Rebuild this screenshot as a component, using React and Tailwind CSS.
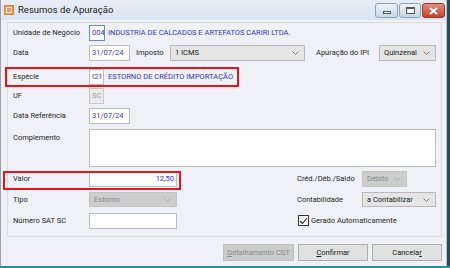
import React from "react";

const font = { fontFamily: 'Roboto, "Noto Sans", sans-serif' };

function Arrow({ color = "#6b6b6b" }) {
  return (
    <svg width="7" height="4" viewBox="0 0 7 4" className="shrink-0">
      <path d="M0.5 0.5 L3.5 3.5 L6.5 0.5" fill="none" stroke={color} strokeWidth="0.9" />
    </svg>
  );
}

function Select({ w, text, disabled, h = "h-[16px]" }) {
  return (
    <div
      className={`${w} ${h} shrink-0 flex items-center justify-between pl-[4px] pr-[5px] border ${
        disabled ? "bg-[#cdcdcd] border-[#c4c4c4] text-[#8a8a8a]" : "bg-[#e5e5e5] border-[#b9b9b9] text-[#1a1a1a]"
      }`}
    >
      <span className="leading-none whitespace-nowrap">{text}</span>
      <Arrow color={disabled ? "#a8a8a8" : "#6b6b6b"} />
    </div>
  );
}

function Input({ w, text, right, focus, disabled, h = "h-[16px]" }) {
  return (
    <div
      className={`${w} ${h} shrink-0 flex items-center px-[2px] border overflow-hidden ${
        focus ? "border-[#5b8fc7]" : disabled ? "border-[#c9c9c9]" : "border-[#bdbdbd]"
      } ${disabled ? "bg-[#ececec] text-[#9a9a9a]" : "bg-white text-[#3636c4]"} ${right ? "justify-end" : ""}`}
    >
      <span className="leading-none whitespace-nowrap">{text}</span>
    </div>
  );
}

function Label({ children, className = "" }) {
  return <div className={`w-[76px] shrink-0 text-[#1e1e1e] leading-none whitespace-nowrap ${className}`}>{children}</div>;
}

function Button({ w, children, disabled }) {
  return (
    <div
      className={`${w} h-[17px] flex items-center justify-center border leading-none whitespace-nowrap ${
        disabled ? "bg-[#cccccc] border-[#bfbfbf] text-[#8a8a8a]" : "bg-[#e1e1e1] border-[#adadad] text-[#1a1a1a]"
      }`}
    >
      {children}
    </div>
  );
}

export default function App() {
  return (
    <div className="w-[450px] h-[268px] flex flex-col overflow-hidden bg-[#2e4a55] text-[7.5px]" style={font}>
      <div className="flex h-[266px]">
        <div className="relative w-[447px] h-[266px] flex flex-col bg-[#f0f1f7] border-l border-[#9aa3ad] border-r border-r-[#b9c3cf]">
          {/* Title bar */}
          <div className="h-[20px] shrink-0 flex items-start bg-gradient-to-b from-[#e6edf6] to-[#dbe5f1]">
            <div className="mt-[5px] ml-[3px] w-[10px] h-[10px] bg-[#f39a5a] border border-[#e0783a] flex items-center justify-center">
              <div className="w-[6px] h-[6px] border border-white/80" />
            </div>
            <div className="ml-[4px] mt-[5px] text-[9.5px] leading-none text-[#1b1b1b] whitespace-nowrap">Resumos de Apuração</div>
            <div className="ml-auto mt-[3px] mr-[1px] flex gap-[1px]">
              <div className="w-[23px] h-[15px] rounded-[3px] border border-[#8ea2b8] bg-gradient-to-b from-[#eef3f9] to-[#c9d6e6] flex items-center justify-center">
                <div className="w-[8px] h-[3px] bg-white border border-[#4a5a6c] mt-[4px]" />
              </div>
              <div className="w-[22px] h-[15px] rounded-[3px] border border-[#8ea2b8] bg-gradient-to-b from-[#eef3f9] to-[#c9d6e6] flex items-center justify-center">
                <div className="w-[9px] h-[7px] border border-[#4a5a6c] border-t-2 bg-white" />
              </div>
              <div className="w-[23px] h-[15px] rounded-[3px] border border-[#8e3a30] bg-gradient-to-b from-[#e48b7e] to-[#c3402f] flex items-center justify-center">
                <svg width="9" height="8" viewBox="0 0 9 8">
                  <path d="M1 1 L8 7 M8 1 L1 7" stroke="white" strokeWidth="2" />
                </svg>
              </div>
            </div>
          </div>

          {/* Client */}
          <div className="flex-1 flex flex-col pl-[6px] pr-[4px]">
            <div className="mt-[2px] h-[215px] border border-[#d9dadf] flex flex-col pl-[5px] pr-[5px]">
              {/* Row 1 */}
              <div className="mt-[2px] h-[16px] flex items-center">
                <Label>Unidade de Negócio</Label>
                <Input w="w-[16px]" text="004" focus />
                <span className="ml-[3px] text-[#3636c4] leading-none whitespace-nowrap">INDUSTRIA DE CALCADOS E ARTEFATOS CARIRI LTDA.</span>
              </div>
              {/* Row 2 */}
              <div className="mt-[4px] h-[16px] flex items-center">
                <Label>Data</Label>
                <Input w="w-[41px]" text="31/07/24" />
                <span className="ml-[6px] w-[34px] leading-none text-[#1e1e1e] whitespace-nowrap">Imposto</span>
                <Select w="w-[135px]" text="1 ICMS" />
                <span className="ml-[11px] w-[63px] leading-none text-[#1e1e1e] whitespace-nowrap">Apuração do IPI</span>
                <Select w="w-[57px]" text="Quinzenal" />
              </div>
              {/* Row 3 */}
              <div className="mt-[8px] h-[16px] flex items-center">
                <Label>Espécie</Label>
                <Input w="w-[15px]" text="I21" />
                <span className="ml-[4px] text-[#3636c4] leading-none whitespace-nowrap">ESTORNO DE CRÉDITO IMPORTAÇÃO</span>
              </div>
              {/* Row 4 */}
              <div className="mt-[3px] h-[16px] flex items-center">
                <Label>UF</Label>
                <Input w="w-[15px]" text="SC" disabled />
              </div>
              {/* Row 5 */}
              <div className="mt-[4px] h-[16px] flex items-center">
                <Label>Data Referência</Label>
                <Input w="w-[41px]" text="31/07/24" />
              </div>
              {/* Row 6 */}
              <div className="mt-[5px] h-[38px] flex items-start">
                <Label className="mt-[5px]">Complemento</Label>
                <div className="w-[347px] h-[38px] bg-white border border-[#bdbdbd]" />
              </div>
              {/* Row 7 */}
              <div className="mt-[4px] h-[16px] flex items-center">
                <Label>Valor</Label>
                <Input w="w-[88px]" text="12,50" right />
                <span className="ml-[120px] w-[65px] leading-none text-[#1e1e1e] whitespace-nowrap">Créd./Déb./Saldo</span>
                <Select w="w-[45px]" text="Débito" disabled />
              </div>
              {/* Row 8 */}
              <div className="mt-[5px] h-[15px] flex items-center">
                <Label>Tipo</Label>
                <Select w="w-[88px]" h="h-[15px]" text="Estorno" disabled />
                <span className="ml-[120px] w-[65px] leading-none text-[#1e1e1e] whitespace-nowrap">Contabilidade</span>
                <Select w="w-[74px]" h="h-[15px]" text="a Contabilizar" />
              </div>
              {/* Row 9 */}
              <div className="mt-[6px] h-[15px] flex items-center">
                <Label>Número SAT SC</Label>
                <Input w="w-[88px]" h="h-[16px]" text="" />
                <div className="ml-[121px] flex items-center">
                  <div className="w-[11px] h-[11px] bg-white border border-[#333] flex items-center justify-center">
                    <svg width="9" height="8" viewBox="0 0 9 8">
                      <path d="M1 4 L3.5 6.5 L8 1" fill="none" stroke="#222" strokeWidth="1.1" />
                    </svg>
                  </div>
                  <span className="ml-[2px] leading-none text-[#1e1e1e] whitespace-nowrap">Gerado Automaticamente</span>
                </div>
              </div>
            </div>

            {/* Buttons */}
            <div className="mt-[7px] flex justify-end gap-[4px]">
              <Button w="w-[71px]" disabled>
                <span><u>D</u>etalhamento CST</span>
              </Button>
              <Button w="w-[70px]">
                <span><u>C</u>onfirmar</span>
              </Button>
              <Button w="w-[70px]">
                <span>Cancela<u>r</u></span>
              </Button>
            </div>
          </div>

          {/* Annotation boxes */}
          <div className="absolute left-[4px] top-[67px] w-[234px] h-[20px] border-2 border-[#e8141c]" />
          <div className="absolute left-[2px] top-[171px] w-[178px] h-[19px] border-2 border-[#e8141c]" />
        </div>
        <div className="flex-1 bg-[#2e4a55]" />
      </div>
      <div className="h-[2px] bg-[#2b8aa6]" />
    </div>
  );
}
